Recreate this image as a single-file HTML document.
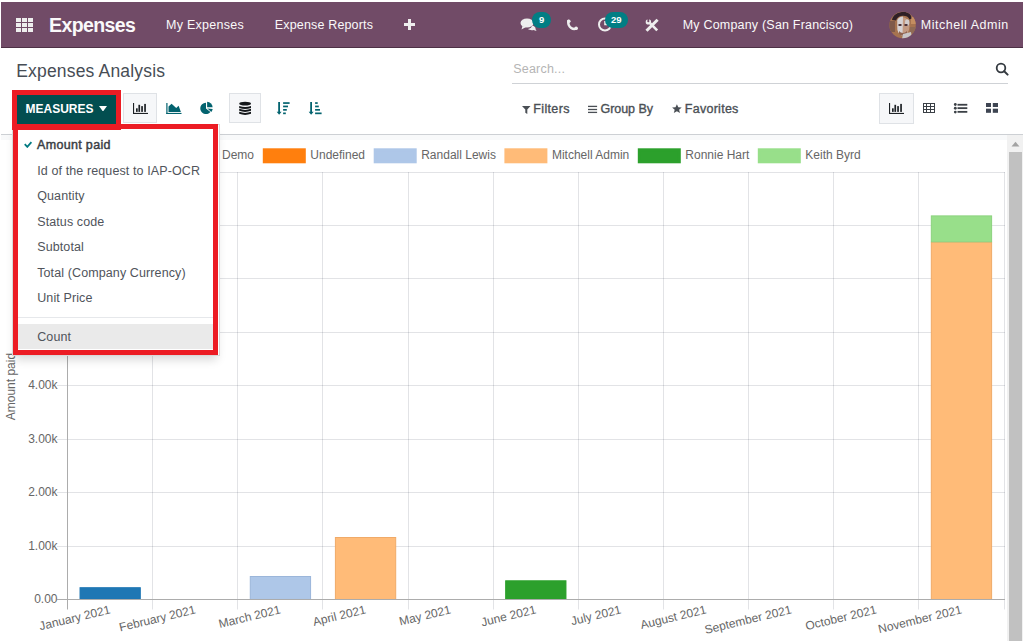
<!DOCTYPE html>
<html><head><meta charset="utf-8"><title>Expenses Analysis</title>
<style>
html,body{margin:0;padding:0;}
body{width:1024px;height:641px;overflow:hidden;position:relative;background:#fff;font-family:"Liberation Sans", sans-serif;}
.t{position:absolute;white-space:nowrap;}
.r{position:absolute;}
</style></head><body>
<div class="r" style="left:1px;top:2px;width:1022px;height:45px;background:#714B67;border-bottom:1px solid #4d3045"></div>
<div class="r" style="left:16px;top:18px;width:5px;height:4px;background:#eeeeee"></div>
<div class="r" style="left:16px;top:23px;width:5px;height:4px;background:#eeeeee"></div>
<div class="r" style="left:16px;top:28px;width:5px;height:4px;background:#eeeeee"></div>
<div class="r" style="left:22px;top:18px;width:5px;height:4px;background:#eeeeee"></div>
<div class="r" style="left:22px;top:23px;width:5px;height:4px;background:#eeeeee"></div>
<div class="r" style="left:22px;top:28px;width:5px;height:4px;background:#eeeeee"></div>
<div class="r" style="left:28px;top:18px;width:5px;height:4px;background:#eeeeee"></div>
<div class="r" style="left:28px;top:23px;width:5px;height:4px;background:#eeeeee"></div>
<div class="r" style="left:28px;top:28px;width:5px;height:4px;background:#eeeeee"></div>
<div class="t" style="left:49.10px;top:16.29px;font-size:19.5px;line-height:19.5px;color:#faf9fa;font-weight:bold;letter-spacing:-0.62px;">Expenses</div>
<div class="t" style="left:166.00px;top:19.02px;font-size:12.5px;line-height:12.5px;color:#faf9fa;font-weight:normal;letter-spacing:0.27px;">My Expenses</div>
<div class="t" style="left:274.80px;top:19.02px;font-size:12.5px;line-height:12.5px;color:#faf9fa;font-weight:normal;letter-spacing:0.16px;">Expense Reports</div>
<div class="r" style="left:404px;top:22.9px;width:10.8px;height:3.3px;background:#eeeeee"></div>
<div class="r" style="left:407.9px;top:19.2px;width:3.6px;height:10.8px;background:#eeeeee"></div>
<svg class="r" style="left:519px;top:16px" width="20" height="17" viewBox="0 0 20 17">
<ellipse cx="8" cy="7" rx="6.5" ry="4.6" fill="#eeeeee"/>
<path d="M3.5 10 L2.5 13.5 L7 11 Z" fill="#eeeeee"/>
<path d="M13 9.5 C15.5 10 17 11.5 16.5 13 L17.5 15 L14.5 14 C12.5 14.5 10 14 9 13 C11.5 12.5 13 11 13 9.5Z" fill="#eeeeee"/>
</svg>
<div class="r" style="left:532px;top:12px;width:19px;height:16px;background:#017e84;border-radius:8px"></div>
<div class="t" style="left:538.90px;top:15.36px;font-size:9.5px;line-height:9.5px;color:#fff;font-weight:bold;letter-spacing:0px;">9</div>
<svg class="r" style="left:562px;top:15px" width="20" height="20" viewBox="562 15 20 20"><path d="M568.4 21 Q567.6 25.5 571.2 28 Q573.6 29.6 576.3 28.6" fill="none" stroke="#eeeeee" stroke-width="2.5" stroke-linecap="round"/><circle cx="568.8" cy="21.3" r="1.8" fill="#eeeeee"/><circle cx="576.1" cy="28.3" r="1.8" fill="#eeeeee"/></svg>
<svg class="r" style="left:597px;top:16px" width="16" height="16" viewBox="0 0 16 16">
<circle cx="8" cy="8.5" r="6" fill="none" stroke="#eeeeee" stroke-width="2"/>
<path d="M8 5 V8.5 H10.5" fill="none" stroke="#eeeeee" stroke-width="1.6"/>
</svg>
<div class="r" style="left:605px;top:12px;width:23px;height:16px;background:#017e84;border-radius:8px"></div>
<div class="t" style="left:611.00px;top:15.36px;font-size:9.5px;line-height:9.5px;color:#fff;font-weight:bold;letter-spacing:0px;">29</div>
<svg class="r" style="left:640px;top:14px" width="24" height="22" viewBox="640 14 24 22"><path d="M657.6 19.7 L646.5 30.8" stroke="#eeeeee" stroke-width="3"/>
<path d="M650.3 23.3 L657.2 30.3" stroke="#eeeeee" stroke-width="2.6"/>
<circle cx="648.4" cy="21.9" r="2.7" fill="#eeeeee"/>
<path d="M647.2 18.6 L649.3 18.6 L649.1 21.4 L647.8 21.6Z" fill="#714B67"/>
<circle cx="648.3" cy="21.3" r="1" fill="#714B67"/></svg>
<div class="t" style="left:682.70px;top:19.02px;font-size:12.5px;line-height:12.5px;color:#faf9fa;font-weight:normal;letter-spacing:0.2px;">My Company (San Francisco)</div>
<svg class="r" style="left:888px;top:11px" width="30" height="28" viewBox="888 11 30 28"><defs><clipPath id="avc"><circle cx="902.6" cy="25" r="13.2"/></clipPath></defs>
<g clip-path="url(#avc)">
<rect x="888" y="11" width="30" height="28" fill="#a6734f"/>
<rect x="889" y="21" width="6" height="11" fill="#7f5a4a"/>
<rect x="910" y="27" width="7" height="6" fill="#8f6a55"/>
<rect x="911" y="17" width="6" height="7" fill="#c48d60"/>
<path d="M892 20 C893 14.5 898 12 904 12 C908.5 12 911.5 14.5 911.5 18.5 L909.5 19.5 C908.5 16.8 906 15.8 903 15.8 C899.5 15.8 897 17.5 896 20.5 Z" fill="#2f2026"/>
<ellipse cx="903.3" cy="26.3" rx="6.2" ry="9" fill="#c39a82"/>
<path d="M897.2 20 C898.5 17.5 901 16.5 903 16.5 L902.5 36 C900 35 898 33 897.5 30 Z" fill="#d6d2d3"/>
<ellipse cx="907.2" cy="22.5" rx="2.2" ry="3.2" fill="#d2cccb"/>
<rect x="898.5" y="24" width="3" height="2" fill="#4e353b"/><rect x="904.5" y="24" width="3" height="2" fill="#4e353b"/>
<path d="M899 31 C901 33.5 905 33.5 907 31 L907 34 C905 36 901 36 899 34Z" fill="#8e6350"/>
<path d="M903 34 L911 32 L912 39 L902 39Z" fill="#c8c6c8"/>
</g></svg>
<div class="t" style="left:920.80px;top:19.02px;font-size:12.5px;line-height:12.5px;color:#faf9fa;font-weight:normal;letter-spacing:0.52px;">Mitchell Admin</div>
<div class="t" style="left:16.20px;top:62.89px;font-size:17.5px;line-height:17.5px;color:#474d55;font-weight:normal;letter-spacing:0.18px;">Expenses Analysis</div>
<div class="t" style="left:513.20px;top:63.22px;font-size:12.5px;line-height:12.5px;color:#b5b5b5;font-weight:normal;letter-spacing:0.22px;">Search...</div>
<div class="r" style="left:512px;top:83px;width:496px;height:1px;background:#cfd2d6"></div>
<svg class="r" style="left:995px;top:62px" width="14" height="14" viewBox="0 0 14 14">
<circle cx="6" cy="6" r="4.3" fill="none" stroke="#343a40" stroke-width="1.8"/>
<path d="M9.2 9.2 L12.6 12.6" stroke="#343a40" stroke-width="2" stroke-linecap="round"/>
</svg>
<div class="r" style="left:14px;top:93px;width:105px;height:31px;background:#024e50"></div>
<div class="t" style="left:25.50px;top:102.54px;font-size:12px;line-height:12px;color:#ffffff;font-weight:bold;letter-spacing:0px;">MEASURES</div>
<svg class="r" style="left:99px;top:105.8px" width="9" height="6" viewBox="0 0 9 6"><path d="M0 0.1 H8 L4.4 5.1 H3.6Z" fill="#fff"/></svg>
<div class="r" style="left:123px;top:93px;width:34px;height:30px;background:#f6f7f9;border:1px solid #dfe2e6;box-sizing:border-box"></div>
<svg class="r" style="left:128px;top:98px" width="24" height="20" viewBox="128 98 24 20"><rect x="133" y="103" width="1.1" height="11" fill="#1d2125"/><rect x="133" y="112.9" width="15" height="1.1" fill="#1d2125"/><rect x="136" y="108.3" width="1.7" height="3.6" fill="#1d2125"/><rect x="138.4" y="104.8" width="1.7" height="7.1" fill="#1d2125"/><rect x="141.2" y="106.1" width="1.7" height="5.8" fill="#1d2125"/><rect x="144.2" y="103.9" width="1.7" height="8" fill="#1d2125"/></svg>
<svg class="r" style="left:162px;top:98px" width="24" height="20" viewBox="162 98 24 20"><rect x="166.3" y="103" width="1.2" height="11" fill="#03636f"/>
<rect x="166.3" y="112.9" width="15.2" height="1.1" fill="#03636f"/>
<path d="M168.5 111.9 L168.5 106.5 L171.6 103.8 L176.2 108 L178.6 105.8 L180.9 111.9Z" fill="#03636f"/></svg>
<svg class="r" style="left:196px;top:98px" width="22" height="20" viewBox="196 98 22 20"><path d="M206 108.4 L206 102.7 A5.7 5.7 0 1 0 210.37 112.06 Z" fill="#03636f"/>
<path d="M207.1 107.3 L207.1 101.8 A5.5 5.5 0 0 1 212.6 107.3 Z" fill="#03636f"/>
<path d="M207.4 108.4 L212.7 109.1 A5.3 5.3 0 0 1 211.3 111.9 Z" fill="#03636f"/></svg>
<div class="r" style="left:229px;top:93px;width:32px;height:30px;background:#f6f7f9;border:1px solid #dfe2e6;box-sizing:border-box"></div>
<svg class="r" style="left:236px;top:98px" width="18" height="20" viewBox="236 98 18 20"><ellipse cx="245.1" cy="103.65" rx="5.9" ry="1.9" fill="#14171a"/><path d="M239.2 105.90 Q245.1 108.10 251 105.90 V107.90 Q245.1 110.10 239.2 107.90Z" fill="#14171a"/><path d="M239.2 108.85 Q245.1 111.05 251 108.85 V110.85 Q245.1 113.05 239.2 110.85Z" fill="#14171a"/><path d="M239.2 111.80 Q245.1 114.00 251 111.80 V113.80 Q245.1 116.00 239.2 113.80Z" fill="#14171a"/></svg>
<svg class="r" style="left:272px;top:98px" width="22" height="20" viewBox="272 98 22 20"><rect x="278.2" y="102" width="1.8" height="10.5" fill="#03636f"/><path d="M276.7 111.7 H281.6 L279.15 114.7Z" fill="#03636f"/><rect x="283.1" y="102.2" width="6.5" height="1.7" fill="#03636f"/><rect x="283.1" y="105.6" width="4.9" height="1.7" fill="#03636f"/><rect x="283.1" y="109.0" width="3.7" height="1.7" fill="#03636f"/><rect x="283.1" y="112.5" width="2.7" height="1.7" fill="#03636f"/></svg>
<svg class="r" style="left:304px;top:98px" width="22" height="20" viewBox="304 98 22 20"><rect x="310.2" y="102" width="1.8" height="10.5" fill="#03636f"/><path d="M308.7 111.7 H313.6 L311.15 114.7Z" fill="#03636f"/><rect x="315.1" y="102.2" width="2.6" height="1.7" fill="#03636f"/><rect x="315.1" y="105.6" width="3.7" height="1.7" fill="#03636f"/><rect x="315.1" y="109.0" width="4.9" height="1.7" fill="#03636f"/><rect x="315.1" y="112.5" width="6.5" height="1.7" fill="#03636f"/></svg>
<svg class="r" style="left:521.5px;top:105.5px" width="9" height="8" viewBox="0 0 9 8"><path d="M0 0 H8.5 L5.3 3.5 V8 L3.3 6.8 V3.5Z" fill="#4a4f55"/></svg>
<div class="t" style="left:533.30px;top:102.82px;font-size:12.5px;line-height:12.5px;color:#4a4f55;font-weight:normal;letter-spacing:0.35px;-webkit-text-stroke:0.35px #4a4f55">Filters</div>
<svg class="r" style="left:588px;top:104px" width="10" height="10" viewBox="0 0 10 10"><rect x="0" y="1.75" width="9.1" height="1.3" fill="#4a4f55"/><rect x="0" y="4.85" width="9.1" height="1.3" fill="#4a4f55"/><rect x="0" y="7.75" width="9.1" height="1.3" fill="#4a4f55"/></svg>
<div class="t" style="left:600.50px;top:102.82px;font-size:12.5px;line-height:12.5px;color:#4a4f55;font-weight:normal;letter-spacing:-0.05px;-webkit-text-stroke:0.35px #4a4f55">Group By</div>
<svg class="r" style="left:672px;top:104.2px" width="10" height="10" viewBox="0 0 10 10"><path d="M4.9 0.3 L6.3 3.3 L9.7 3.6 L7.1 5.8 L8 9 L4.9 7.3 L1.8 9 L2.7 5.8 L0.1 3.6 L3.5 3.3Z" fill="#4a4f55"/></svg>
<div class="t" style="left:684.80px;top:102.82px;font-size:12.5px;line-height:12.5px;color:#4a4f55;font-weight:normal;letter-spacing:0.27px;-webkit-text-stroke:0.35px #4a4f55">Favorites</div>
<div class="r" style="left:879px;top:93px;width:35px;height:31px;background:#f6f7f9;border:1px solid #dfe2e6;box-sizing:border-box"></div>
<svg class="r" style="left:884px;top:98px" width="24" height="20" viewBox="884 98 24 20"><rect x="889" y="103" width="1.1" height="11" fill="#1d2125"/><rect x="889" y="112.9" width="15" height="1.1" fill="#1d2125"/><rect x="892" y="108.3" width="1.7" height="3.6" fill="#1d2125"/><rect x="894.4" y="104.8" width="1.7" height="7.1" fill="#1d2125"/><rect x="897.2" y="106.1" width="1.7" height="5.8" fill="#1d2125"/><rect x="900.2" y="103.9" width="1.7" height="8" fill="#1d2125"/></svg>
<svg class="r" style="left:920px;top:100px" width="18" height="16" viewBox="920 100 18 16"><rect x="923.5" y="103.5" width="11" height="9" fill="none" stroke="#3b4046" stroke-width="1"/><path d="M923 106.5 H935 M923 109.5 H935 M926.5 103 V113 M930.5 103 V113" stroke="#3b4046" stroke-width="1"/></svg>
<svg class="r" style="left:950px;top:100px" width="20" height="16" viewBox="950 100 20 16"><circle cx="955.3" cy="104.5" r="1.4" fill="#3b4046"/><rect x="957.5" y="103.85" width="9.8" height="1.8" fill="#3b4046"/><circle cx="955.3" cy="108.25" r="1.4" fill="#3b4046"/><rect x="957.5" y="107.25" width="9.8" height="1.8" fill="#3b4046"/><circle cx="955.3" cy="112.1" r="1.4" fill="#3b4046"/><rect x="957.5" y="110.95" width="9.8" height="1.8" fill="#3b4046"/></svg>
<svg class="r" style="left:982px;top:100px" width="20" height="16" viewBox="982 100 20 16"><rect x="986" y="103" width="5" height="4" fill="#3e4552"/><rect x="992.8" y="103" width="5.2" height="4" fill="#3e4552"/><rect x="986" y="108.7" width="5" height="4.1" fill="#3e4552"/><rect x="992.8" y="108.7" width="5.2" height="4.1" fill="#3e4552"/></svg>
<div class="r" style="left:1px;top:134px;width:1022px;height:1px;background:#cdd0d4"></div>
<div class="r" style="left:1px;top:135px;width:1006px;height:5px;background:#f8f9fa"></div>
<svg class="r" style="left:0;top:0" width="1024" height="641" viewBox="0 0 1024 641">
<g font-family='"Liberation Sans", sans-serif' font-size="12" fill="#666">
<line x1="57" x2="1005" y1="546.5" y2="546.5" stroke="rgba(20,25,50,0.12)" stroke-width="1"/>
<line x1="57" x2="1005" y1="492.5" y2="492.5" stroke="rgba(20,25,50,0.12)" stroke-width="1"/>
<line x1="57" x2="1005" y1="439.5" y2="439.5" stroke="rgba(20,25,50,0.12)" stroke-width="1"/>
<line x1="57" x2="1005" y1="385.5" y2="385.5" stroke="rgba(20,25,50,0.12)" stroke-width="1"/>
<line x1="57" x2="1005" y1="332.5" y2="332.5" stroke="rgba(20,25,50,0.12)" stroke-width="1"/>
<line x1="57" x2="1005" y1="278.5" y2="278.5" stroke="rgba(20,25,50,0.12)" stroke-width="1"/>
<line x1="57" x2="1005" y1="225.5" y2="225.5" stroke="rgba(20,25,50,0.12)" stroke-width="1"/>
<line x1="57" x2="1005" y1="172.5" y2="172.5" stroke="rgba(20,25,50,0.12)" stroke-width="1"/>
<line x1="152.5" x2="152.5" y1="172" y2="609.5" stroke="rgba(20,25,50,0.12)" stroke-width="1"/>
<line x1="237.5" x2="237.5" y1="172" y2="609.5" stroke="rgba(20,25,50,0.12)" stroke-width="1"/>
<line x1="322.5" x2="322.5" y1="172" y2="609.5" stroke="rgba(20,25,50,0.12)" stroke-width="1"/>
<line x1="408.5" x2="408.5" y1="172" y2="609.5" stroke="rgba(20,25,50,0.12)" stroke-width="1"/>
<line x1="493.5" x2="493.5" y1="172" y2="609.5" stroke="rgba(20,25,50,0.12)" stroke-width="1"/>
<line x1="578.5" x2="578.5" y1="172" y2="609.5" stroke="rgba(20,25,50,0.12)" stroke-width="1"/>
<line x1="663.5" x2="663.5" y1="172" y2="609.5" stroke="rgba(20,25,50,0.12)" stroke-width="1"/>
<line x1="748.5" x2="748.5" y1="172" y2="609.5" stroke="rgba(20,25,50,0.12)" stroke-width="1"/>
<line x1="833.5" x2="833.5" y1="172" y2="609.5" stroke="rgba(20,25,50,0.12)" stroke-width="1"/>
<line x1="918.5" x2="918.5" y1="172" y2="609.5" stroke="rgba(20,25,50,0.12)" stroke-width="1"/>
<line x1="1004.5" x2="1004.5" y1="172" y2="609.5" stroke="rgba(20,25,50,0.12)" stroke-width="1"/>
<line x1="67.5" x2="67.5" y1="172" y2="609.5" stroke="#acacac" stroke-width="1"/>
<text x="57.5" y="603.17" text-anchor="end">0.00</text>
<text x="57.5" y="549.75" text-anchor="end">1.00k</text>
<text x="57.5" y="496.33" text-anchor="end">2.00k</text>
<text x="57.5" y="442.91" text-anchor="end">3.00k</text>
<text x="57.5" y="389.49" text-anchor="end">4.00k</text>
<text x="57.5" y="336.07" text-anchor="end">5.00k</text>
<text x="57.5" y="282.65" text-anchor="end">6.00k</text>
<text x="57.5" y="229.23" text-anchor="end">7.00k</text>
<text x="57.5" y="175.81" text-anchor="end">8.00k</text>
<text transform="translate(15,386.6) rotate(-90)" text-anchor="middle">Amount paid</text>
<text transform="translate(110.16,609.5) rotate(-13.5)" y="3.9" text-anchor="end">January 2021</text>
<text transform="translate(195.29,609.5) rotate(-13.5)" y="3.9" text-anchor="end">February 2021</text>
<text transform="translate(280.42,609.5) rotate(-13.5)" y="3.9" text-anchor="end">March 2021</text>
<text transform="translate(365.55,609.5) rotate(-13.5)" y="3.9" text-anchor="end">April 2021</text>
<text transform="translate(450.68,609.5) rotate(-13.5)" y="3.9" text-anchor="end">May 2021</text>
<text transform="translate(535.81,609.5) rotate(-13.5)" y="3.9" text-anchor="end">June 2021</text>
<text transform="translate(620.95,609.5) rotate(-13.5)" y="3.9" text-anchor="end">July 2021</text>
<text transform="translate(706.07,609.5) rotate(-13.5)" y="3.9" text-anchor="end">August 2021</text>
<text transform="translate(791.21,609.5) rotate(-13.5)" y="3.9" text-anchor="end">September 2021</text>
<text transform="translate(876.33,609.5) rotate(-13.5)" y="3.9" text-anchor="end">October 2021</text>
<text transform="translate(961.47,609.5) rotate(-13.5)" y="3.9" text-anchor="end">November 2021</text>
<rect x="80.02" y="587.70" width="60.29" height="11.77" fill="#1f77b4" stroke="#1f77b4" stroke-width="1"/>
<rect x="250.28" y="576.50" width="60.29" height="22.97" fill="#aec7e8" stroke="#9bb6da" stroke-width="1"/>
<rect x="335.41" y="537.50" width="60.29" height="61.97" fill="#ffbb78" stroke="#f0aa68" stroke-width="1"/>
<rect x="505.67" y="580.80" width="60.29" height="18.67" fill="#2ca02c" stroke="#2ca02c" stroke-width="1"/>
<rect x="931.32" y="242.30" width="60.29" height="357.17" fill="#ffbb78" stroke="#f0aa68" stroke-width="1"/>
<rect x="931.32" y="215.90" width="60.29" height="25.90" fill="#98df8a" stroke="#8cd27e" stroke-width="1"/>
<line x1="57" x2="1005" y1="599.5" y2="599.5" stroke="#acacac" stroke-width="1"/>
<rect x="176" y="149.8" width="40" height="12" fill="#1f77b4" stroke="#1f77b4" stroke-width="3"/>
<text x="222" y="159.1">Demo</text>
<rect x="264.3" y="149.8" width="40" height="12" fill="#ff7f0e" stroke="#ff7f0e" stroke-width="3"/>
<text x="310.3" y="159.1">Undefined</text>
<rect x="375.2" y="149.8" width="40" height="12" fill="#aec7e8" stroke="#aec7e8" stroke-width="3"/>
<text x="421.2" y="159.1">Randall Lewis</text>
<rect x="505.9" y="149.8" width="40" height="12" fill="#ffbb78" stroke="#ffbb78" stroke-width="3"/>
<text x="551.9" y="159.1">Mitchell Admin</text>
<rect x="639.3" y="149.8" width="40" height="12" fill="#2ca02c" stroke="#2ca02c" stroke-width="3"/>
<text x="685.3" y="159.1">Ronnie Hart</text>
<rect x="759.3" y="149.8" width="40" height="12" fill="#98df8a" stroke="#98df8a" stroke-width="3"/>
<text x="805.3" y="159.1">Keith Byrd</text>
</g></svg>
<div class="r" style="left:1007px;top:135px;width:16px;height:506px;background:#f1f1f1"></div>
<div class="r" style="left:1009px;top:152px;width:13px;height:489px;background:#c1c1c1"></div>
<svg class="r" style="left:1011px;top:141px" width="9" height="6" viewBox="0 0 9 6"><path d="M0.5 5.5 L4.5 0.8 L8.5 5.5Z" fill="#a3a3a3"/></svg>
<div class="r" style="left:12px;top:124px;width:208px;height:232px;background:#fff;border:1px solid rgba(0,0,0,.15);box-sizing:border-box;box-shadow:0 7px 9px -3px rgba(0,0,0,.15)"></div>
<svg class="r" style="left:23.5px;top:141px" width="9" height="7" viewBox="0 0 9 7"><path d="M0.75 3.1 L3.3 5.9 L7.4 1.1" fill="none" stroke="#027b82" stroke-width="1.75"/></svg>
<div class="t" style="left:37.00px;top:139.12px;font-size:12.5px;line-height:12.5px;color:#3a3e44;font-weight:normal;letter-spacing:0.33px;-webkit-text-stroke:0.45px #3a3e44">Amount paid</div>
<div class="t" style="left:37.20px;top:165.22px;font-size:12.5px;line-height:12.5px;color:#50545b;font-weight:normal;letter-spacing:0.11px;">Id of the request to IAP-OCR</div>
<div class="t" style="left:37.20px;top:190.12px;font-size:12.5px;line-height:12.5px;color:#50545b;font-weight:normal;letter-spacing:0.11px;">Quantity</div>
<div class="t" style="left:37.20px;top:215.82px;font-size:12.5px;line-height:12.5px;color:#50545b;font-weight:normal;letter-spacing:0.11px;">Status code</div>
<div class="t" style="left:37.20px;top:240.82px;font-size:12.5px;line-height:12.5px;color:#50545b;font-weight:normal;letter-spacing:0.11px;">Subtotal</div>
<div class="t" style="left:37.20px;top:266.52px;font-size:12.5px;line-height:12.5px;color:#50545b;font-weight:normal;letter-spacing:0.11px;">Total (Company Currency)</div>
<div class="t" style="left:37.20px;top:292.02px;font-size:12.5px;line-height:12.5px;color:#50545b;font-weight:normal;letter-spacing:0.11px;">Unit Price</div>
<div class="r" style="left:18px;top:317px;width:196px;height:1px;background:#e6e8eb"></div>
<div class="r" style="left:18px;top:324px;width:196px;height:25px;background:#eaeaea"></div>
<div class="t" style="left:37.20px;top:330.92px;font-size:12.5px;line-height:12.5px;color:#50545b;font-weight:normal;letter-spacing:0.11px;">Count</div>
<div class="r" style="left:12px;top:90px;width:109px;height:40px;border:5px solid #ec1c24;box-sizing:border-box"></div>
<div class="r" style="left:13px;top:124px;width:205px;height:231px;border:5px solid #ec1c24;box-sizing:border-box"></div>
</body></html>
